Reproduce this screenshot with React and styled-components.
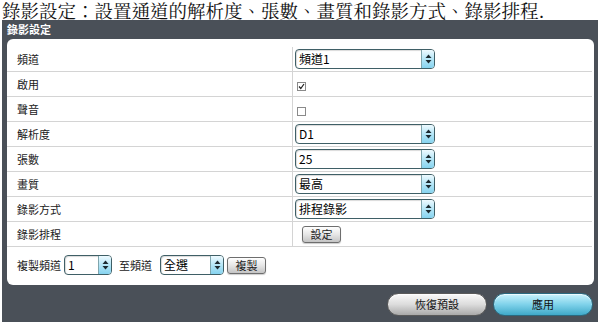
import React from "react";
import styled, { createGlobalStyle } from "styled-components";

const Global = createGlobalStyle`
  html, body { margin: 0; padding: 0; background: #ffffff; }
  body { font-family: "Liberation Sans", "Noto Sans CJK TC", sans-serif; width: 600px; height: 326px; overflow: hidden; }
`;

const Heading = styled.div`
  height: 20px;
  line-height: 20px;
  padding-left: 2px;
  font-family: "Noto Serif CJK TC", "Liberation Serif", "Noto Sans CJK TC", serif;
  font-size: 18.5px;
  color: #111;
  white-space: nowrap;
`;

const Frame = styled.div`
  margin: 0 2px;
  height: 302px;
  background: #4a5058;
  display: flex;
  flex-direction: column;
`;

const TitleBar = styled.div`
  height: 19px;
  line-height: 18px;
  padding-left: 5px;
  color: #fff;
  font-size: 11px;
  font-weight: bold;
  font-family: "Noto Sans CJK TC", sans-serif;
`;

const Panel = styled.div`
  margin: 0 4px 0 5px;
  height: 246px;
  background: #fff;
  border-radius: 6px;
  padding-top: 8px;
  box-sizing: border-box;
`;

const Row = styled.div`
  display: flex;
  height: 25px;
  border-bottom: 1px solid #d4d4d4;
  box-sizing: border-box;
  margin-right: 2px;
`;

const Label = styled.div`
  width: 286px;
  flex: none;
  padding-left: 10px;
  box-sizing: border-box;
  display: flex;
  align-items: center;
  font-size: 11px;
  color: #1a1a1a;
  font-family: "Noto Sans CJK TC", sans-serif;
  border-right: 1px solid #d4d4d4;
`;

const Value = styled.div`
  flex: 1;
  display: flex;
  align-items: ${(p) => (p.$low ? "flex-end" : "center")};
  padding-left: ${(p) => p.$pad || 2}px;
  padding-bottom: ${(p) => (p.$low ? 5 : 0)}px;
  box-sizing: border-box;
`;

const SelectBox = styled.div`
  display: inline-flex;
  width: ${(p) => p.$w}px;
  height: 20px;
  box-sizing: border-box;
  border: 1px solid #3f5f66;
  border-radius: 4px;
  overflow: hidden;
  background: #fff;
  box-shadow: inset 1px 1px 1px rgba(0,0,0,0.15);
`;

const SelectText = styled.div`
  flex: 1;
  padding-left: 3px;
  font-size: 12px;
  line-height: 18px;
  color: #000;
  font-family: "Noto Sans CJK TC", sans-serif;
  white-space: nowrap;
`;

const SelectArrow = styled.div`
  width: 12px;
  flex: none;
  border-left: 1px solid #7fa5ad;
  background: linear-gradient(#eefaff, #b5e6f7 50%, #86d3ef);
  display: flex;
  align-items: center;
  justify-content: center;
`;

const Select = ({ w, children }) => (
  <SelectBox $w={w}>
    <SelectText>{children}</SelectText>
    <SelectArrow>
      <svg width="7" height="10" viewBox="0 0 7 10">
        <path d="M3.5 0.5 L6.5 4 L0.5 4 Z" fill="#1d2a30" />
        <path d="M3.5 9.5 L6.5 6 L0.5 6 Z" fill="#1d2a30" />
      </svg>
    </SelectArrow>
  </SelectBox>
);

const Check = styled.div`
  width: 9px;
  height: 9px;
  box-sizing: border-box;
  border: 1px solid #8a8a8a;
  background: #fff;
  display: flex;
  align-items: center;
  justify-content: center;
`;

const SmallButton = styled.div`
  width: 39px;
  height: 17px;
  box-sizing: border-box;
  border: 1px solid #6e6e6e;
  border-radius: 3px;
  background: linear-gradient(#ffffff, #e6e6e6 50%, #c4c4c4);
  font-size: 11px;
  line-height: 15px;
  text-align: center;
  color: #222;
  font-family: "Noto Sans CJK TC", sans-serif;
  box-shadow: 0 1px 1px rgba(0,0,0,0.2);
`;

const CopyRow = styled.div`
  display: flex;
  align-items: center;
  height: 20px;
  margin-top: 8px;
  padding-left: 10px;
  gap: 3px;
  font-size: 11px;
  color: #1a1a1a;
  font-family: "Noto Sans CJK TC", sans-serif;
`;

const Spacer = styled.span`
  width: ${(p) => p.$w}px;
`;

const Footer = styled.div`
  flex: 1;
  display: flex;
  align-items: center;
  justify-content: flex-end;
  gap: 6px;
  padding-right: 5px;
  padding-top: 1px;
`;

const Pill = styled.div`
  width: 100px;
  height: 23px;
  box-sizing: border-box;
  border-radius: 12px;
  border: 1px solid ${(p) => (p.$primary ? "#2a6a80" : "#5a5a5a")};
  background: ${(p) =>
    p.$primary
      ? "linear-gradient(#c9f2fc, #7fd2ea 50%, #3fa9c9)"
      : "linear-gradient(#fafafa, #dcdcdc 50%, #a9a9a9)"};
  font-size: 11px;
  line-height: 21px;
  text-align: center;
  color: #111;
  font-family: "Noto Sans CJK TC", sans-serif;
  box-shadow: inset 0 1px 1px rgba(255,255,255,0.7);
`;

const rows = [
  { label: "頻道", kind: "select", value: "頻道1" },
  { label: "啟用", kind: "check", checked: true },
  { label: "聲音", kind: "check", checked: false },
  { label: "解析度", kind: "select", value: "D1" },
  { label: "張數", kind: "select", value: "25" },
  { label: "畫質", kind: "select", value: "最高" },
  { label: "錄影方式", kind: "select", value: "排程錄影" },
  { label: "錄影排程", kind: "button", value: "設定" },
];

export default function App() {
  return (
    <>
      <Global />
      <Heading>錄影設定：設置通道的解析度、張數、畫質和錄影方式、錄影排程.</Heading>
      <Frame>
        <TitleBar>錄影設定</TitleBar>
        <Panel>
          {rows.map((r) => (
            <Row key={r.label}>
              <Label>{r.label}</Label>
              {r.kind === "select" && (
                <Value>
                  <Select w={140}>{r.value}</Select>
                </Value>
              )}
              {r.kind === "check" && (
                <Value $pad={4} $low>
                  <Check>
                    {r.checked && (
                      <svg width="7" height="7" viewBox="0 0 7 7">
                        <path d="M1 3.5 L2.8 5.5 L6 1" stroke="#222" strokeWidth="1.2" fill="none" />
                      </svg>
                    )}
                  </Check>
                </Value>
              )}
              {r.kind === "button" && (
                <Value $pad={9}>
                  <SmallButton>{r.value}</SmallButton>
                </Value>
              )}
            </Row>
          ))}
          <CopyRow>
            <span>複製頻道</span>
            <Select w={48}>1</Select>
            <Spacer $w={1} />
            <span>至頻道</span>
            <Spacer $w={2} />
            <Select w={64}>全選</Select>
            <SmallButton>複製</SmallButton>
          </CopyRow>
        </Panel>
        <Footer>
          <Pill>恢復預設</Pill>
          <Pill $primary>應用</Pill>
        </Footer>
      </Frame>
    </>
  );
}
